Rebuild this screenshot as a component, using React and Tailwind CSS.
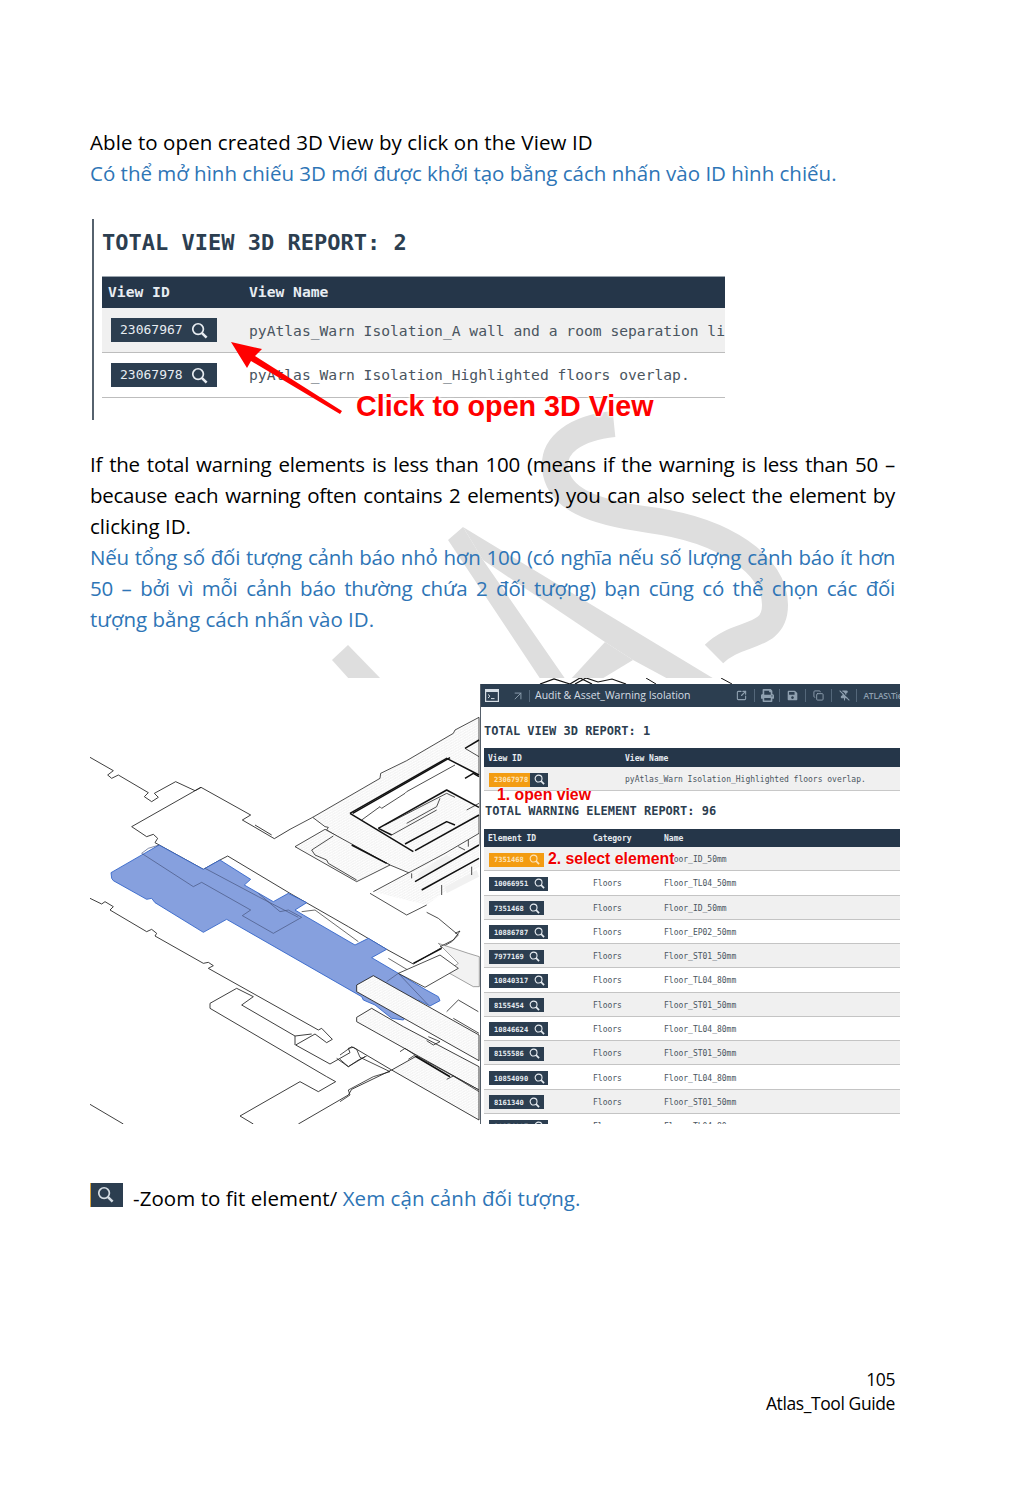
import React from "react";
import { ArrowUpRight, SquareArrowOutUpRight, Copy, PinOff } from "lucide-react";
import { FaPrint, FaSave } from "react-icons/fa";

const rows = [
  ["10066951", "Floor_TL04_50mm"],
  ["7351468", "Floor_ID_50mm"],
  ["10886787", "Floor_EP02_50mm"],
  ["7977169", "Floor_ST01_50mm"],
  ["10840317", "Floor_TL04_80mm"],
  ["8155454", "Floor_ST01_50mm"],
  ["10846624", "Floor_TL04_80mm"],
  ["8155586", "Floor_ST01_50mm"],
  ["10854090", "Floor_TL04_80mm"],
  ["8161340", "Floor_ST01_50mm"],
  ["10854097", "Floor_TL04_80mm"],
];

const lines = [
  "15,232 85,272 68,285 80,295 100,285 190,338 178,350 200,365 220,352 208,340 272,305 330,332 348,322 497,405 472,420 510,442 568,476 615,448",
  "140,440 348,322",
  "140,440 185,470 205,463 218,475 210,488 355,568 405,540 428,528 615,640 790,740 905,808 985,852",
  "510,435 560,465",
  "15,655 50,672 60,665 85,680 75,690 185,755 200,748 215,760 210,768 355,850 370,847 385,857 370,865 700,1050 710,1045 742,1078 725,1088 690,1062 632,1095 735,1152 795,1118 790,1105 805,1102 920,1170",
  "375,970 455,925 505,950 470,975 630,1068 680,1062",
  "375,985 725,1190 752,1205 700,1235 645,1205 465,1308 505,1332",
  "375,970 375,985",
  "630,1068 630,1095",
  "755,1135 790,1160 840,1130",
  "640,1332 790,1245 800,1228 920,1170",
  "15,1273 115,1332",
];

const upper = [
  "65,420 130,378",
  "65,420 75,435 110,450 115,460 200,510",
  "215,330 270,290 275,295 345,250 350,245 495,165",
  "285,345 470,250 495,262",
  "305,375 440,300",
  "350,340 440,290 450,265",
  "530,300 567,280",
  "525,115 567,140",
  "455,525 455,555",
  "365,490 365,505",
  "505,410 525,420",
  "535,390 535,410",
  "240,550 350,615 410,585",
  "250,545 465,430 567,370",
  "545,470 545,495",
];

const upperHeavy = [
  "180,310 470,145 567,195",
  "188,310 480,143",
  "180,310 370,425",
  "265,355 470,240 567,292",
  "265,355 305,375",
  "345,402 470,335 495,345",
  "375,422 567,315",
  "525,115 567,90",
  "525,205 550,190 567,200",
  "185,405 290,460",
  "375,515 567,405",
  "395,540 567,445",
];

const lower = [
  "345,10 360,3 340,30 300,50",
  "355,210 415,245",
  "320,245 355,210",
  "340,265 417,310",
  "265,320 300,335 280,345 260,332",
  "180,365 195,355 225,375 205,388",
  "0,375 35,350 50,358 60,382 150,425",
  "0,388 25,410 55,390 80,378",
  "0,515 30,495 25,480 100,440 150,425",
  "320,448 340,438 417,485",
];

function Cad() {
  return (
    <svg viewBox="15 -6 1170 1338" className="w-[390px] h-[446px] shrink-0">
      <defs>
        <pattern id="hatch" width="14" height="8" patternUnits="userSpaceOnUse" patternTransform="skewY(-30)">
          <rect width="14" height="8" fill="#fff" />
          <path d="M0 0H14M0 4H14M7 0V4M0 4V8" stroke="#e4e4e4" strokeWidth="1" />
        </pattern>
      </defs>
      <g transform="translate(615,90)" strokeLinejoin="round">
        <polygon points="68,322 270,205 272,190 350,152 490,70 495,60 567,22 567,405 375,515 350,500 360,490 300,465 185,405 110,360 115,352 105,350" fill="url(#hatch)" stroke="#222" strokeWidth="2.4" />
        <polygon points="180,310 470,145 567,195 567,315 375,422" fill="#fff" />
        <polygon points="265,355 470,240 567,292 567,315 375,422" fill="url(#hatch)" />
        <polygon points="15,410 105,358 300,465 200,515" fill="url(#hatch)" stroke="#222" strokeWidth="2.4" />
        <polygon points="250,545 465,430 567,370 567,470 410,585" fill="url(#hatch)" />
        <polygon points="385,490 470,435 490,450 385,505" fill="#f1f1f1" />
        <polygon points="465,530 560,480 567,500 470,550" fill="#f1f1f1" />
        <polyline points="0,358 68,322" fill="none" stroke="#222" strokeWidth="2.4" />
        {upper.map((p, i) => (
          <polyline key={i} points={p} fill="none" stroke="#222" strokeWidth="2.4" />
        ))}
        {upperHeavy.map((p, i) => (
          <polyline key={i} points={p} fill="none" stroke="#111" strokeWidth="4.5" />
        ))}
      </g>
      {lines.map((p, i) => (
        <polyline key={i} points={p} fill="none" stroke="#222" strokeWidth="2.6" />
      ))}
      <polyline points="1025,697 1060,715 1120,765 1100,785 985,852" fill="none" stroke="#222" strokeWidth="2.4" />
      <polygon points="1060,790 1150,820 1183,830 1183,920 1165,920 1085,875 1120,850" fill="#f2f2f2" stroke="#555" strokeWidth="1.6" />
      <polygon
        points="78,578 222,495 355,568 405,540 497,598 478,615 565,665 610,640 665,668 630,690 655,705 810,795 850,775 905,808 860,833 940,880 1020,928 1060,950 1065,962 1035,978 1000,960 955,1020 920,1015 870,975 835,960 830,950 425,718 355,757 210,668 200,655 185,658 85,602 80,595"
        fill="#86a0de"
        stroke="#2f63c8"
        strokeWidth="2.6"
      />
      <polyline points="170,520 325,620 350,607 497,690 472,707 565,760 650,712 610,690 585,695 520,640" fill="none" stroke="#44527a" strokeWidth="2" />
      <polyline points="170,520 190,505 222,495" fill="none" stroke="#44527a" strokeWidth="2" />
      <polyline points="360,565 520,650 640,712" fill="none" stroke="#44527a" strokeWidth="2" />
      <polyline points="905,905 940,880 1030,975" fill="none" stroke="#44527a" strokeWidth="2" />
      <polyline points="650,695 690,690 820,785" fill="none" stroke="#222" strokeWidth="2" />
      <polyline points="910,835 985,880" fill="none" stroke="#222" strokeWidth="2" />
      <g transform="translate(765,750)" strokeLinejoin="round">
        <polygon points="175,130 300,75 355,115 255,172" fill="#fff" stroke="#222" strokeWidth="2.4" />
        <polyline points="220,100 305,55" fill="none" stroke="#111" strokeWidth="4.5" />
        <polygon points="50,165 100,137 417,315 417,392 50,185" fill="url(#hatch)" stroke="#222" strokeWidth="2.6" />
        <polygon points="50,262 95,235 190,290 417,410 417,480 50,275" fill="url(#hatch)" stroke="#222" strokeWidth="2.6" />
        <polygon points="155,420 230,378 417,480 417,570" fill="url(#hatch)" stroke="#222" strokeWidth="2.6" />
        <polyline points="225,378 330,440" fill="none" stroke="#111" strokeWidth="5" />
        {lower.map((p, i) => (
          <polyline key={i} points={p} fill="none" stroke="#222" strokeWidth="2.4" />
        ))}
      </g>
    </svg>
  );
}

function Magnifier({ className = "" }) {
  return (
    <svg viewBox="0 0 24 24" className={className} fill="none" stroke="currentColor">
      <circle cx="10" cy="10" r="7.5" strokeWidth="2.4" />
      <path d="M15.6 15.6 22 22" strokeWidth="3.6" />
    </svg>
  );
}

function IdButton({ id, orange, split }) {
  return (
    <div className={`flex items-center h-[14px] ${orange && !split ? "bg-[#f39c12]" : "bg-[#2c3e50]"}`}>
      <span className={`pl-[5px] pr-[2px] h-full flex items-center font-bold text-[7.1px] ${orange ? "bg-[#f39c12] text-[#fde3b8]" : "text-[#e8edf2]"}`}>{id}</span>
      <span className="w-[18px] h-full flex items-center justify-center">
        <Magnifier className={`w-[11px] h-[11px] ${orange && !split ? "text-[#fde3b8]" : "text-[#e8edf2]"}`} />
      </span>
    </div>
  );
}

function Tool({ children }) {
  return (
    <span className="flex items-center justify-center w-[25.7px] h-[13px] border-r border-[#54677a] shrink-0 text-[#8fa0b0]">
      {children}
    </span>
  );
}

function Panel() {
  const cell = "text-[8px] text-[#4a5560]";
  const head = "text-[8px] font-bold text-[#e8edf2]";
  return (
    <div className="relative w-[420px] h-[440px] overflow-hidden border-l border-[#555f6a] bg-white font-['DejaVu_Sans_Mono',monospace]">
      <div className="flex items-center h-[23px] bg-[#2c3e50] pl-[4px] font-['Open_Sans',sans-serif] text-[10.5px] text-[#d5dde4] whitespace-nowrap">
        <svg viewBox="0 0 14 13" className="w-[14px] h-[13px] mr-[12px] shrink-0">
          <rect x="0.6" y="0.6" width="12.8" height="11.8" fill="none" stroke="#d5dde4" strokeWidth="1.2" />
          <rect x="0.6" y="0.6" width="12.8" height="2.4" fill="#d5dde4" />
          <path d="M3 5.5 5 7.2 3 9M6 9.6H9.5" fill="none" stroke="#d5dde4" strokeWidth="1" />
        </svg>
        <ArrowUpRight size={14} strokeWidth={1.6} className="text-[#8fa0b0] mr-[4px] shrink-0" />
        <span className="h-[12px] border-l border-[#54677a] mr-[5px] shrink-0" />
        <span className="w-[194px] shrink-0">Audit &amp; Asset_Warning Isolation</span>
        <Tool><SquareArrowOutUpRight size={11} strokeWidth={2.4} /></Tool>
        <Tool><FaPrint size={13} /></Tool>
        <Tool><FaSave size={11} /></Tool>
        <Tool><Copy size={11} strokeWidth={2} /></Tool>
        <Tool><PinOff size={11} strokeWidth={2.2} fill="currentColor" /></Tool>
        <span className="ml-[6px] text-[8.5px] font-semibold text-[#8fa0b0] tracking-[-0.2px]">ATLAS\Tiep</span>
      </div>
      <div className="pl-[3px] pt-[17px] h-[41px] text-[12px] leading-[14px] font-bold text-[#2c3e50]">TOTAL VIEW 3D REPORT: 1</div>
      <div className="ml-[3px]">
        <div className={`flex items-center h-[19px] pt-[2px] bg-[#253649] ${head}`}>
          <span className="w-[141px] pl-[4px]">View ID</span>
          <span>View Name</span>
        </div>
        <div className={`flex items-center h-[24px] pt-[2px] bg-[#f0f0f0] border-b border-[#c8c8c8] ${cell}`}>
          <span className="w-[141px] pl-[5px] flex">
            <IdButton id="23067978" orange split />
          </span>
          <span>pyAtlas_Warn Isolation_Highlighted floors overlap.</span>
        </div>
      </div>
      <div className="pl-[4px] pt-[13px] h-[38px] text-[12px] leading-[14px] font-bold text-[#2c3e50]">TOTAL WARNING ELEMENT REPORT: 96</div>
      <div className="ml-[3px]">
        <div className={`flex items-center h-[18px] bg-[#253649] ${head}`}>
          <span className="w-[109px] pl-[4px]">Element ID</span>
          <span className="w-[71px]">Category</span>
          <span>Name</span>
        </div>
        <div className={`flex items-center h-[24.27px] pt-[2px] bg-[#f0f0f0] border-b border-[#c4c4c4] ${cell}`}>
          <span className="w-[109px] pl-[5px] flex">
            <IdButton id="7351468" orange />
          </span>
          <span className="w-[71px]">Floors</span>
          <span>Floor_ID_50mm</span>
        </div>
        {rows.map(([id, name], i) => (
          <div key={i} className={`flex items-center h-[24.27px] pt-[2px] border-b border-[#c4c4c4] ${cell} ${i % 2 === 1 ? "bg-[#f0f0f0]" : "bg-white"}`}>
            <span className="w-[109px] pl-[5px] flex">
              <IdButton id={id} />
            </span>
            <span className="w-[71px]">Floors</span>
            <span>{name}</span>
          </div>
        ))}
      </div>
      <span className="absolute left-[16px] top-[102px] font-['Liberation_Sans',sans-serif] font-bold text-[15.8px] leading-[18px] text-[#f00000] [text-shadow:0_0_2px_#fff]">1. open view</span>
      <span className="absolute left-[67px] top-[166px] font-['Liberation_Sans',sans-serif] font-bold text-[15.8px] leading-[18px] text-[#f00000] bg-[#f0f0f0] [text-shadow:0_0_2px_#fff]">2. select element</span>
    </div>
  );
}

function Watermark() {
  return (
    <svg className="absolute left-0 top-0 w-[1021px] h-[700px]" viewBox="0 0 1021 700">
      <g fill="#dedede">
        <polygon points="332,660 348,645 382,680 350,680" />
        <polygon points="448,540 463,527 483,560 566,680 541,680" />
        <polygon points="463,527 716,680 670,680 633,660 605,642 483,560" />
        <polygon points="605,642 633,660 600,680 570,680" />
      </g>
      <path d="M614,424 C575,428 553,445 555,468 C558,498 590,512 650,520 C725,530 775,565 775,605 C775,640 738,630 714,654" fill="none" stroke="#dedede" strokeWidth="26" />
    </svg>
  );
}

export default function App() {
  const para = "font-['Open_Sans','Noto_Sans',sans-serif] text-[20.5px] leading-[31px]";
  const just = "text-justify [text-align-last:justify] whitespace-nowrap tracking-[-0.25px]";
  return (
    <div className="relative w-[1021px] h-[1500px] overflow-hidden bg-white">
      <Watermark />
      <div className={`relative pl-[90px] pr-[126px] pt-[127px] text-black ${para}`}>
        <p className="tracking-[0.08px]">Able to open created 3D View by click on the View ID</p>
        <p className="text-[#2e75b6]">Có thể mở hình chiếu 3D mới được khởi tạo bằng cách nhấn vào ID hình chiếu.</p>

        <div className="relative mt-[30px] ml-[2px] w-[633px] h-[201px] border-l-2 border-[#56626e] pl-[8px] font-['DejaVu_Sans_Mono',monospace] tracking-normal">
          <div className="pt-[10px] h-[57px] text-[22px] leading-[28px] font-bold text-[#2c3e50]">TOTAL VIEW 3D REPORT: 2</div>
          <div className="flex items-center h-[32px] pb-[2px] bg-[#253649] border-t border-[#9aa4ad] text-[14.65px] font-bold text-[#e8edf2] pl-[6px]">
            <span className="w-[141px]">View ID</span>
            <span>View Name</span>
          </div>
          <div className="flex items-center h-[45px] pt-[1px] bg-[#f0f0f0] border-b border-[#bdbdbd] text-[14.65px] leading-[20px] text-[#4a5560] overflow-hidden whitespace-nowrap">
            <span className="w-[147px] pl-[9px] shrink-0">
              <span className="flex items-center justify-between w-[106px] h-[24px] -mt-[1px] bg-[#2c3e50] pl-[9px] pr-[9px] text-[#e8edf2] text-[13px]">
                23067967 <Magnifier className="w-[17px] h-[17px]" />
              </span>
            </span>
            <span>pyAtlas_Warn Isolation_A wall and a room separation li</span>
          </div>
          <div className="flex items-center h-[45px] border-b border-[#bdbdbd] text-[14.65px] leading-[20px] text-[#4a5560] whitespace-nowrap">
            <span className="w-[147px] pl-[9px] shrink-0">
              <span className="flex items-center justify-between w-[106px] h-[24px] bg-[#2c3e50] pl-[9px] pr-[9px] text-[#e8edf2] text-[13px]">
                23067978 <Magnifier className="w-[17px] h-[17px]" />
              </span>
            </span>
            <span>pyAtlas_Warn Isolation_Highlighted floors overlap.</span>
          </div>
          <svg className="absolute left-[136px] top-[115px] w-[125px] h-[85px]" viewBox="230 334 125 85">
            <polygon points="231,342 262,349 255,356 342,411 340,414 251,361 247,368" fill="#ff0000" />
          </svg>
          <span className="absolute left-[261px] top-[168px] px-[1px] font-['Liberation_Sans',sans-serif] font-bold text-[28.7px] leading-[38px] text-[#ff0000] whitespace-nowrap [text-shadow:0_0_3px_#fff,0_0_3px_#fff,0_0_3px_#fff]">Click to open 3D View</span>
        </div>

        <div className="mt-[29px] w-[805px]">
          <p className={just}>If the total warning elements is less than 100 (means if the warning is less than 50 –</p>
          <p className={just}>because each warning often contains 2 elements) you can also select the element by</p>
          <p>clicking ID.</p>
          <div className="text-[#2e75b6]">
            <p className={just}>Nếu tổng số đối tượng cảnh báo nhỏ hơn 100 (có nghĩa nếu số lượng cảnh báo ít hơn</p>
            <p className={just}>50 – bởi vì mỗi cảnh báo thường chứa 2 đối tượng) bạn cũng có thể chọn các đối</p>
            <p>tượng bằng cách nhấn vào ID.</p>
          </div>
        </div>

        <div className="flex mt-[43px] w-[810px] bg-white">
          <Cad />
          <div className="flex flex-col">
            <svg viewBox="0 0 420 6" className="w-[420px] h-[6px]">
              <polyline points="60,6 74,1 90,6 100,0 112,6" fill="none" stroke="#111" strokeWidth="1.2" />
              <polyline points="95,6 106,0 118,4 132,1 146,6" fill="none" stroke="#111" strokeWidth="1.2" />
              <polyline points="166,0 176,6" fill="none" stroke="#111" strokeWidth="1" />
              <polyline points="241,0 252,6" fill="none" stroke="#111" strokeWidth="1" />
            </svg>
            <Panel />
          </div>
        </div>

        <div className="flex items-center mt-[59px] h-[31px] whitespace-nowrap tracking-[0.06px]">
          <span className="w-[33px] h-[24px] -mt-[7px] flex items-start pt-[3px] justify-center bg-[#2c3e50] border-l-[1.5px] border-[#d9a441] mr-[10px] shrink-0">
            <Magnifier className="w-[17px] h-[17px] text-[#d5dde4] -ml-[3px]" />
          </span>
          <span>-Zoom to fit element/ <span className="text-[#2e75b6]">Xem cận cảnh đối tượng.</span></span>
        </div>
      </div>

      <div className="relative mt-[153px] pr-[126px] text-right font-['Open_Sans',sans-serif] text-[17.5px] leading-[24px] tracking-[-0.4px] text-black">
        <div>105</div>
        <div>Atlas_Tool Guide</div>
      </div>
    </div>
  );
}
